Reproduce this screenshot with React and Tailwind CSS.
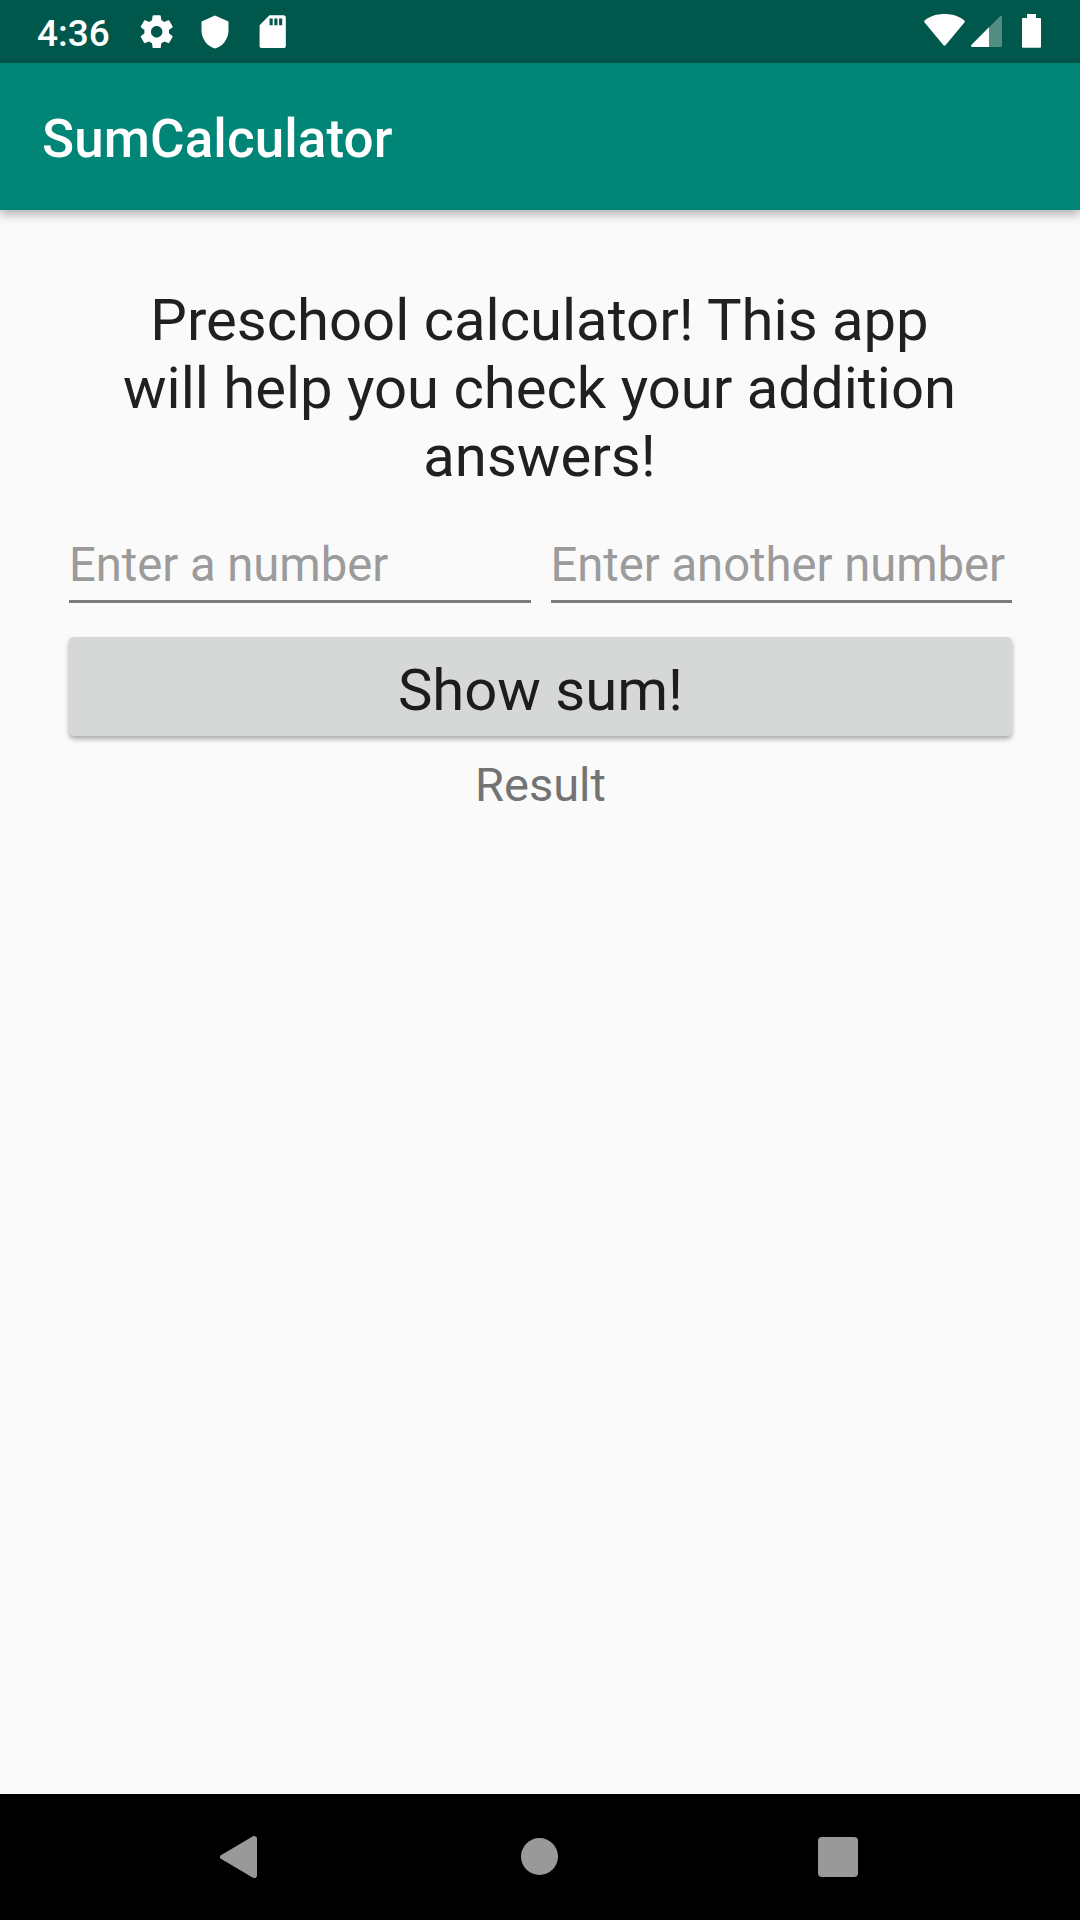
function StatusBar() {
  return (
    <div className="flex h-[63px] items-start justify-between bg-[#00574b] text-white">
      <div className="flex h-full items-start">
        <span className="ml-[37px] mt-[12px] w-[75px] whitespace-nowrap text-[37px] font-medium leading-[43px]">4:36</span>
        <svg className="ml-[25.4px] mt-[12px] size-[39.4px]" viewBox="0 0 24 24" fill="currentColor">
          <path d="M19.43 12.98c.04-.32.07-.64.07-.98s-.03-.66-.07-.98l2.11-1.65c.19-.15.24-.42.12-.64l-2-3.46c-.12-.22-.39-.3-.61-.22l-2.49 1c-.52-.4-1.08-.73-1.69-.98l-.38-2.65C14.46 2.18 14.25 2 14 2h-4c-.25 0-.46.18-.49.42l-.38 2.65c-.61.25-1.17.59-1.69.98l-2.49-1c-.23-.09-.49 0-.61.22l-2 3.46c-.13.22-.07.49.12.64l2.11 1.65c-.04.32-.07.65-.07.98s.03.66.07.98l-2.11 1.65c-.19.15-.24.42-.12.64l2 3.46c.12.22.39.3.61.22l2.49-1c.52.4 1.08.73 1.69.98l.38 2.65c.03.24.24.42.49.42h4c.25 0 .46-.18.49-.42l.38-2.65c.61-.25 1.17-.59 1.69-.98l2.49 1c.23.09.49 0 .61-.22l2-3.46c.12-.22.07-.49-.12-.64l-2.11-1.65zM12 15.5c-1.93 0-3.5-1.57-3.5-3.5s1.57-3.5 3.5-3.5 3.5 1.57 3.5 3.5-1.57 3.5-3.5 3.5z" />
        </svg>
        <svg className="ml-[20.2px] mt-[13.5px] size-[36px]" viewBox="0 0 24 24" fill="currentColor">
          <path d="M12 1L3 5v6c0 5.55 3.84 10.74 9 12 5.16-1.26 9-6.45 9-12V5l-9-4z" />
        </svg>
        <svg className="ml-[20.4px] mt-[12px] size-[39.4px]" viewBox="0 0 24 24" fill="currentColor">
          <path d="M18.700 2H10L4.020 8 4 20.700c0 .7.600 1.300 1.300 1.300h13.400c.7 0 1.300-.6 1.300-1.300V3.300c0-.7-.6-1.300-1.300-1.300zM12 8h-1.900V4H12v4zm2.900 0H13V4h1.900v4zm2.900 0h-1.900V4h1.900v4z" />
        </svg>
      </div>
      <svg className="h-[63px] w-[180px]" viewBox="0 0 180 63" fill="currentColor">
        <path d="M24.6 22.6c-.7-.9-.5-1.700.3-2.300C30 16 37 14 44.500 14s14.500 2 19.600 6.300c.8.600 1 1.400.3 2.300L45.700 45.100c-.7.800-1.700.800-2.400 0z" />
        <path opacity="0.32" d="M71.600 44.700 99.800 16.500c.9-.9 2.200-.4 2.200.900V45.500c0 1-.5 1.500-1.500 1.500H72.400c-1.300 0-1.800-1.300-.8-2.300z" />
        <path d="M71.600 44.700 89 27.300V47H72.400c-1.300 0-1.800-1.300-.8-2.300z" />
        <path d="M127 14h9v4h3.700c.8 0 1.300.5 1.300 1.300v27.200c0 .8-.5 1.300-1.300 1.300h-16.400c-.8 0-1.300-.5-1.300-1.300V19.300c0-.8.5-1.300 1.300-1.300h3.700z" />
      </svg>
    </div>
  );
}

function AppBar({ title }) {
  return (
    <header className="flex h-[147px] items-center bg-[#008577] pl-[42px] shadow-[0_4px_10px_rgba(0,0,0,0.32)]">
      <h1 className="mt-[5px] text-[53px] font-medium leading-[62px] tracking-[0.08px] text-white">{title}</h1>
    </header>
  );
}

function NumberField({ hint }) {
  return (
    <div className="h-[83px] flex-1 border-b-[3px] border-[#7b7b7b] whitespace-nowrap text-[47.25px] leading-[56px] text-[#9b9b9b]">
      <div className="pt-[17px] tracking-[-0.04px]">{hint}</div>
    </div>
  );
}

function NavigationBar() {
  return (
    <nav className="flex h-[126px] items-start bg-black text-[#999999]">
      <svg className="h-[126px] w-full" viewBox="0 0 1080 126" fill="currentColor">
        <path d="M220.900 61.200 252.500 42.400c2-1.100 4.500-.1 4.500 2.200v36.800c0 2.300-2.500 3.300-4.500 2.200L220.900 64.800c-1.300-.9-1.300-2.700 0-3.600z" />
        <circle cx="539.500" cy="62.500" r="18.500" />
        <rect x="818" y="43" width="40" height="40" rx="4" />
      </svg>
    </nav>
  );
}

export default function App() {
  return (
    <div className="flex h-[1920px] w-[1080px] flex-col overflow-hidden bg-[#fafafa] font-['Roboto',sans-serif]">
      <StatusBar />
      <AppBar title="SumCalculator" />
      <main className="flex flex-1 flex-col pl-[69px] pr-[68px] pt-[76px]">
        <p className="whitespace-nowrap pr-[2px] text-center text-[58px] leading-[68px] text-[#202020]">
          Preschool calculator! This app
          <br />
          will help you check your addition
          <br />
          answers!
        </p>
        <div className="mt-[30px] flex gap-[20px]">
          <NumberField hint="Enter a number" />
          <NumberField hint="Enter another number" />
        </div>
        <button className="mt-[34px] h-[99px] rounded-[5px] bg-[#d6d7d7] pt-[6px] text-center text-[58px] leading-[68px] text-[#1c1c1c] shadow-[0_3px_5px_rgba(0,0,0,0.32)]">
          Show sum!
        </button>
        <p className="mt-[21px] text-center text-[47px] leading-[56px] text-[#737373]">Result</p>
      </main>
      <NavigationBar />
    </div>
  );
}
